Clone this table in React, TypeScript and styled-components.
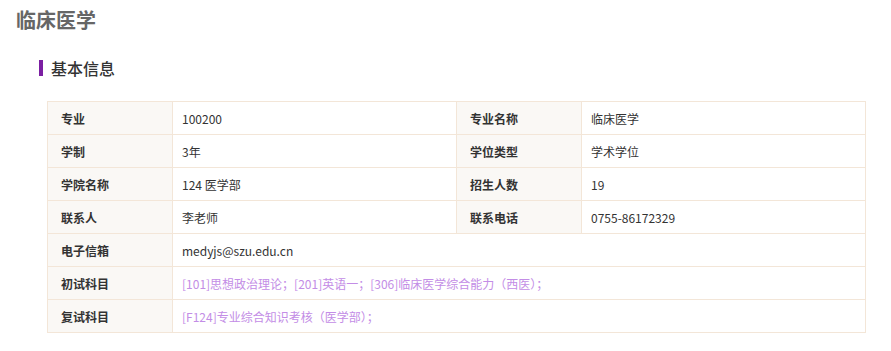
import React from 'react';
import styled, { createGlobalStyle } from 'styled-components';

const GlobalStyle = createGlobalStyle`
  body {
    margin: 0;
    background: #fff;
    font-family: "Microsoft YaHei", "Noto Sans CJK SC", "Liberation Sans", sans-serif;
    color: #333;
  }
`;

interface ICell {
  label: string;
  value: string;
  link?: boolean;
}

const rows: ICell[][] = [
  [{ label: '专业', value: '100200' }, { label: '专业名称', value: '临床医学' }],
  [{ label: '学制', value: '3年' }, { label: '学位类型', value: '学术学位' }],
  [{ label: '学院名称', value: '124 医学部' }, { label: '招生人数', value: '19' }],
  [{ label: '联系人', value: '李老师' }, { label: '联系电话', value: '0755-86172329' }],
  [{ label: '电子信箱', value: 'medyjs@szu.edu.cn' }],
  [{ label: '初试科目', value: '[101]思想政治理论；[201]英语一；[306]临床医学综合能力（西医）；', link: true }],
  [{ label: '复试科目', value: '[F124]专业综合知识考核（医学部）；', link: true }],
];

const App: React.FC = () => {
  return (
    <>
      <GlobalStyle />
      <Page>
        <Title>临床医学</Title>
        <Section>
          <SectionTitle>基本信息</SectionTitle>
          <Table>
            <colgroup>
              <col style={{ width: 125 }} />
              <col style={{ width: 284 }} />
              <col style={{ width: 125 }} />
              <col />
            </colgroup>
            <tbody>
              {rows.map((row, i) => (
                <tr key={i}>
                  {row.map((cell) => (
                    <React.Fragment key={cell.label}>
                      <Label>{cell.label}</Label>
                      <Value colSpan={row.length === 1 ? 3 : 1} $link={cell.link}>
                        {cell.value}
                      </Value>
                    </React.Fragment>
                  ))}
                </tr>
              ))}
            </tbody>
          </Table>
        </Section>
      </Page>
    </>
  );
};

const Page = styled.div`
  padding: 7px 16px 20px 16px;
`;

const Title = styled.h1`
  margin: 0;
  font-size: 20px;
  line-height: 26px;
  font-weight: bold;
  color: #666;
`;

const Section = styled.div`
  padding: 0 24px 0 23px;
`;

const SectionTitle = styled.h2`
  margin: 27px 0 25px 0;
  padding-left: 8px;
  border-left: 4px solid #7b1fa2;
  font-size: 16px;
  line-height: 16px;
  font-weight: 500;
  color: #333;
`;

const Table = styled.table`
  width: 819px;
  margin-left: 8px;
  border-collapse: collapse;
  table-layout: fixed;
  font-size: 12px;
`;

const Label = styled.td`
  height: 32px;
  padding: 0 0 0 13px;
  border: 1px solid #f3e6d8;
  background: #faf8f5;
  font-weight: bold;
  color: #333;
`;

const Value = styled.td<{ $link?: boolean }>`
  height: 32px;
  padding: 0 0 0 9px;
  border: 1px solid #f3e6d8;
  background: #fff;
  color: ${({ $link }) => ($link ? '#c38de6' : '#333')};
`;

export default App;
